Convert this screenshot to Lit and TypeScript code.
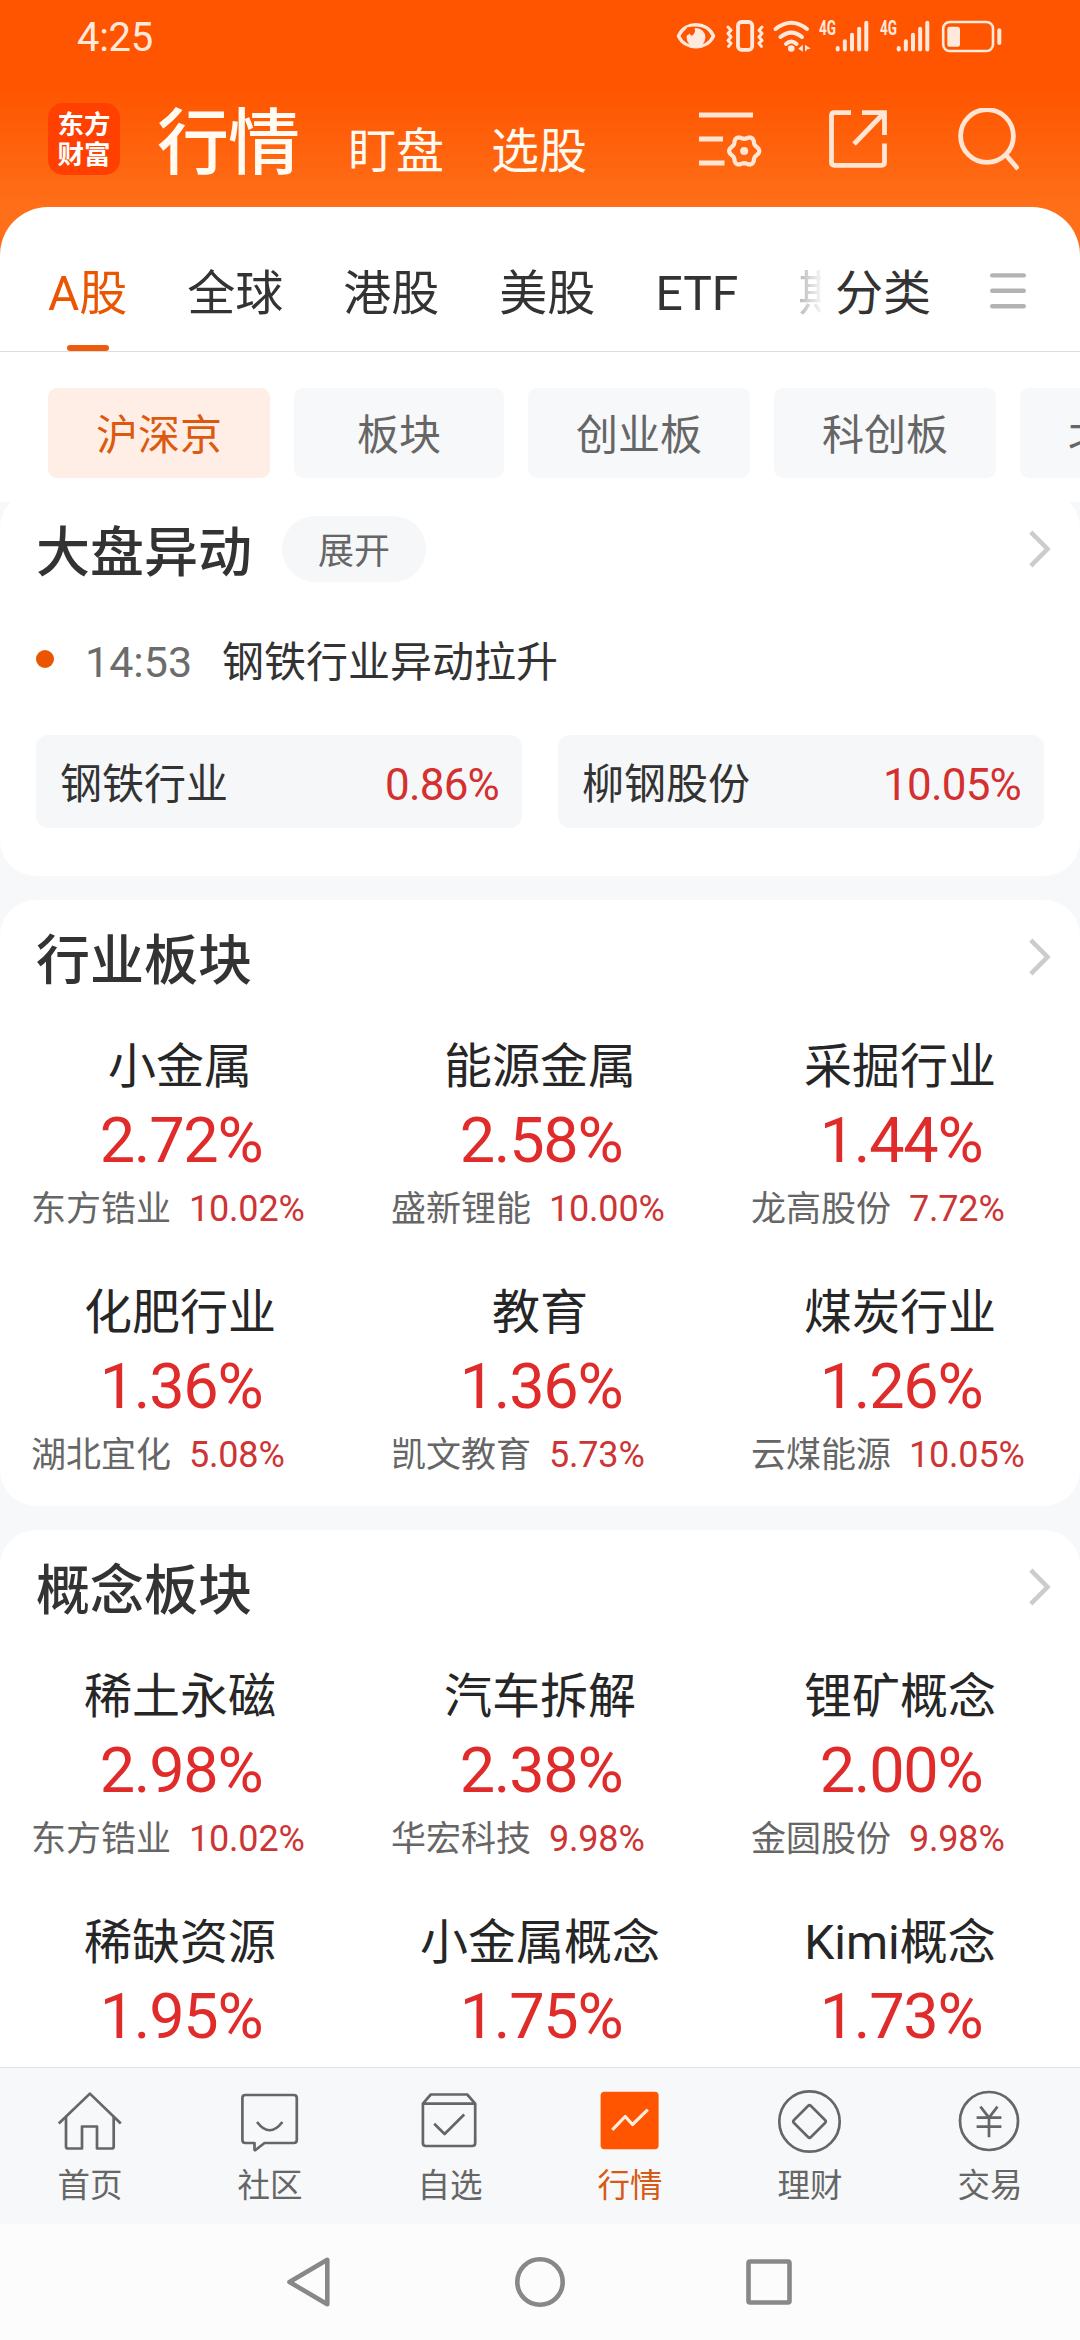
import { LitElement, html, css, svg } from "lit";
import { customElement, property } from "lit/decorators.js";
import { classMap } from "lit/directives/class-map.js";

interface Sector {
  name: string;
  pct: string;
  leader: string;
  leaderPct: string;
}

const s = (name: string, pct: string, leader: string, leaderPct: string): Sector => ({
  name,
  pct,
  leader,
  leaderPct,
});

const INDUSTRIES: Sector[] = [
  s("小金属", "2.72%", "东方锆业", "10.02%"),
  s("能源金属", "2.58%", "盛新锂能", "10.00%"),
  s("采掘行业", "1.44%", "龙高股份", "7.72%"),
  s("化肥行业", "1.36%", "湖北宜化", "5.08%"),
  s("教育", "1.36%", "凯文教育", "5.73%"),
  s("煤炭行业", "1.26%", "云煤能源", "10.05%"),
];

const CONCEPTS: Sector[] = [
  s("稀土永磁", "2.98%", "东方锆业", "10.02%"),
  s("汽车拆解", "2.38%", "华宏科技", "9.98%"),
  s("锂矿概念", "2.00%", "金圆股份", "9.98%"),
  s("稀缺资源", "1.95%", "", ""),
  s("小金属概念", "1.75%", "", ""),
  s("Kimi概念", "1.73%", "", ""),
];

const MARKETS = ["A股", "全球", "港股", "美股", "ETF", "期"];
const BOARDS = ["沪深京", "板块", "创业板", "科创板", "北交所"];

/** Closed outline of a six-lobed gear. */
function gearPath(cx: number, cy: number, r: number, depth: number): string {
  const points: string[] = [];
  for (let a = 0; a < 360; a += 6) {
    const t = (a * Math.PI) / 180;
    const rr = r + depth * Math.cos(6 * t);
    points.push(`${(cx + rr * Math.cos(t)).toFixed(2)} ${(cy + rr * Math.sin(t)).toFixed(2)}`);
  }
  return `M${points.join("L")}Z`;
}

const NAV = [
  {
    label: "首页",
    icon: svg`<path d="M.8 33.5L31.9 3.6L62.8 33.5"/><path d="M8 27V56.5q0 2 2 2H24V36.5H39V58.5H53.7q2 0 2-2V27"/>`,
  },
  {
    label: "社区",
    icon: svg`<path d="M7.4 5H55.8q3 0 3 3V50q0 3-3 3H26.5L17.5 60q-1 .6-1-.6V53H7.4q-3 0-3-3V8q0-3 3-3Z"/><path d="M19 32Q31.7 48.5 44.4 32"/>`,
  },
  {
    label: "自选",
    icon: svg`<path d="M4.9 13.7L12.8 4.5H49.2L57.2 13.7V53q0 3-3 3H7.9q-3 0-3-3ZM4.9 13.7H57.2"/><path d="M16.2 33.7L26.6 44L46.2 24.5"/>`,
  },
  {
    label: "行情",
    active: true,
    icon: svg`<rect class="solid" x="2.6" y="1.7" width="58" height="57.6" rx="4"/><path class="light" d="M14.3 39.9L27.2 26.5L34.5 34.5L49.8 19.7"/>`,
  },
  {
    label: "理财",
    icon: svg`<circle cx="31.5" cy="31.5" r="30.2"/><path d="M30 16Q31.5 14.5 33 16L47 30Q48.5 31.5 47 33L33 47Q31.5 48.5 30 47L16 33Q14.5 31.5 16 30Z"/>`,
  },
  {
    label: "交易",
    icon: svg`<circle cx="31" cy="31" r="29"/><path d="M22.4 16.7L31 27.7L39.5 16.7M18.6 27.7H43.4M18.6 36.7H43.4M31 27.7V47.3"/>`,
  },
];

@customElement("status-bar")
class StatusBar extends LitElement {
  static styles = css`
    :host {
      display: flex;
      justify-content: space-between;
      align-items: center;
      height: 74px;
      padding: 0 78px 0 77px;
      color: #ffe8dc;
    }
    .time {
      font-size: 40px;
      line-height: 48px;
      letter-spacing: -0.3px;
      padding-top: 2px;
    }
    .icons {
      display: block;
      overflow: visible;
      fill: none;
      stroke: #ffe8dc;
      stroke-linecap: round;
      stroke-linejoin: round;
    }
    .f {
      fill: #ffe8dc;
      stroke: none;
    }
    .hole {
      fill: #ff5500;
      stroke: none;
    }
    .net {
      fill: #ffe8dc;
      stroke: none;
      font-size: 19.5px;
      font-weight: 700;
    }
  `;

  private signal(x: number) {
    const tops = [26, 19.3, 12.7, 6.7, 0.7];
    return svg`
      <text class="net" x=${x} y="14.6" textLength="17" lengthAdjust="spacingAndGlyphs">4G</text>
      ${tops.map(
        (t, i) =>
          svg`<rect class="f" x=${x + 16.7 + i * 7.15} y=${t} width="4" height=${31.6 - t} rx="2"/>`
      )}`;
  }

  render() {
    return html`
      <div class="time">4:25</div>
      <svg class="icons" width="326" height="34" viewBox="0 0 326 34">
        <path stroke-width="3.4" d="M2.5 16C9 .9 31 .9 37.5 16C31 30.5 9 30.5 2.5 16Z" />
        <circle class="f" cx="20" cy="17.5" r="9.4" />
        <path class="hole" d="M17.5 6.5a6 6 0 0 1-2 9.5l-1.8-2.6-2 1.8-4-2 3.5-6z" />
        <rect stroke-width="3.8" x="62" y="2" width="14.2" height="27.8" rx="3.5" />
        <path stroke-width="3" d="M52 7l3 3.2l-3 3.4l3 3.4l-3 3.4l3 3l-2.4 3M86 7l-3 3.2l3 3.4l-3 3.4l3 3.4l-3 3l2.4 3" />
        <path stroke-width="4" d="M99.5 9Q115.3-3.4 131 9M104.5 17Q115.3 8.2 126 17M110 24Q115.3 19 120.6 24" />
        <circle class="f" cx="115.3" cy="28.5" r="3.3" />
        <path class="f" d="M122.3 28.8l4.5-4v7zM129 24.8v7l2-2.4 3.6-1z" />
        ${this.signal(143)} ${this.signal(204)}
        <rect stroke-width="2.6" x="267.2" y="2" width="49.8" height="29" rx="6.5" />
        <rect class="f" x="271.3" y="6.7" width="12.7" height="20" rx="2.5" />
        <rect class="f" x="321.3" y="8.3" width="4" height="16.8" rx="2" />
      </svg>
    `;
  }
}

@customElement("app-header")
class AppHeader extends LitElement {
  static styles = css`
    :host {
      display: flex;
      align-items: center;
      height: 133px;
      padding: 0 61px 0 48px;
      box-sizing: border-box;
    }
    .logo {
      display: flex;
      flex-direction: column;
      align-items: center;
      justify-content: center;
      width: 72px;
      height: 72px;
      box-sizing: border-box;
      padding-top: 2px;
      margin-bottom: 3px;
      border-radius: 15px;
      background: #ff4000;
      color: #fff;
      font-size: 26.5px;
      font-weight: 700;
      line-height: 30px;
    }
    .titles {
      display: flex;
      align-items: baseline;
      gap: 47px;
      margin-left: 37px;
      padding-top: 15px;
      flex: 1;
      color: #fffaf2;
      font-size: 48px;
      line-height: 80px;
    }
    .current {
      margin-right: 2px;
      font-size: 72px;
      font-weight: 500;
      letter-spacing: -1px;
    }
    .actions {
      display: flex;
      padding-bottom: 1px;
      fill: none;
      stroke: #ffe5d3;
      stroke-width: 4.8;
    }
    .share {
      margin: 0 70px 0 66px;
    }
    .dot {
      fill: #ffe5d3;
      stroke: none;
    }
  `;

  render() {
    return html`
      <div class="logo"><span>东方</span><span>财富</span></div>
      <div class="titles">
        <span class="current">行情</span>
        <span>盯盘</span>
        <span>选股</span>
      </div>
      <div class="actions">
        <svg width="64" height="64" viewBox="0 0 64 64">
          <path d="M0 7H54M0 31H24M0 55H25.5" />
          <path stroke-width="4.2" stroke-linejoin="round" d=${gearPath(45.2, 43, 13.6, 1.5)} />
          <circle class="dot" cx="45.2" cy="43" r="4" />
        </svg>
        <svg class="share" width="58" height="64" viewBox="0 0 58 64">
          <path d="M22 4.7H5.5q-3 0-3 3V54.3q0 3 3 3H52.5q3 0 3-3V35.5M33 4.7H55.5V27M25 36L55 5" />
        </svg>
        <svg width="62" height="64" viewBox="0 0 62 64">
          <circle cx="30" cy="28" r="26.4" />
          <path d="M48.5 46.5L61 61" />
        </svg>
      </div>
    `;
  }
}

@customElement("market-tabs")
class MarketTabs extends LitElement {
  static styles = css`
    :host {
      display: flex;
      height: 144px;
      padding-left: 48px;
      border-bottom: 1px solid #dcdddf;
      color: #333;
      font-size: 48px;
      line-height: 60px;
      white-space: nowrap;
    }
    .strip {
      display: flex;
      gap: 60px;
      width: 773px;
      overflow: hidden;
      -webkit-mask-image: linear-gradient(to right, #000 calc(100% - 72px), rgba(0, 0, 0, 0.05));
      mask-image: linear-gradient(to right, #000 calc(100% - 72px), rgba(0, 0, 0, 0.05));
    }
    .tab {
      display: flex;
      flex: none;
      flex-direction: column;
      align-items: center;
      justify-content: space-between;
      padding-top: 57px;
    }
    .active {
      color: #ea5504;
    }
    .active::after {
      content: "";
      width: 42px;
      height: 6px;
      border-radius: 3px;
      background: #ef5a0c;
    }
    .more {
      padding: 57px 0 0 14px;
    }
    .menu {
      margin: 66px 0 0 59px;
      stroke: #b3b3b3;
      stroke-width: 4.4;
      stroke-linecap: round;
    }
  `;

  render() {
    return html`
      <div class="strip">
        ${MARKETS.map(
          (m, i) => html`<div class=${classMap({ tab: true, active: i === 0 })}><span>${m}</span></div>`
        )}
      </div>
      <div class="more">分类</div>
      <svg class="menu" width="36" height="36" viewBox="0 0 36 36">
        <path d="M2.2 2.4H33.8M2.2 17.8H33.8M2.2 33.2H33.8" />
      </svg>
    `;
  }
}

@customElement("board-tabs")
class BoardTabs extends LitElement {
  static styles = css`
    :host {
      display: flex;
      gap: 24px;
      padding: 36px 0 24px 48px;
      overflow: hidden;
      white-space: nowrap;
    }
    .chip {
      display: flex;
      flex: none;
      align-items: center;
      justify-content: center;
      box-sizing: border-box;
      min-width: 210px;
      height: 90px;
      padding: 6px 48px 0;
      border-radius: 9px;
      background: #f7f8fa;
      color: #666;
      font-size: 42px;
      line-height: 50px;
    }
    .active {
      background: #ffeee6;
      color: #dc5a10;
    }
  `;

  render() {
    return BOARDS.map(
      (b, i) => html`<div class=${classMap({ chip: true, active: i === 0 })}>${b}</div>`
    );
  }
}

@customElement("section-head")
class SectionHead extends LitElement {
  @property() title = "";

  static styles = css`
    :host {
      display: flex;
      align-items: center;
      height: 114px;
      padding: 0 28px 0 36px;
    }
    .title {
      padding-top: 10px;
      font-size: 54px;
      font-weight: 500;
      line-height: 70px;
      color: #333;
    }
    .chevron {
      margin-left: auto;
      fill: none;
      stroke: #ccc;
      stroke-width: 4.6;
    }
  `;

  render() {
    return html`
      <div class="title">${this.title}</div>
      <slot></slot>
      <svg class="chevron" width="24" height="38" viewBox="0 0 24 38">
        <path d="M2.8 2.2L19.5 19L2.8 35.8" />
      </svg>
    `;
  }
}

@customElement("sector-grid")
class SectorGrid extends LitElement {
  @property({ attribute: false }) items: Sector[] = [];

  static styles = css`
    :host {
      display: grid;
      grid-template-columns: repeat(3, 1fr);
      row-gap: 52px;
      padding: 23px 0 29px;
    }
    .cell {
      display: flex;
      flex-direction: column;
      white-space: nowrap;
    }
    .name {
      text-align: center;
      font-size: 48px;
      line-height: 60px;
      color: #262626;
    }
    .pct {
      margin-top: 6px;
      padding-left: 2px;
      text-align: center;
      font-size: 63px;
      line-height: 76px;
      letter-spacing: -1.3px;
      color: #e02b2b;
    }
    .leader {
      display: flex;
      align-items: baseline;
      gap: 18px;
      margin-top: 8px;
      padding-left: 31px;
      height: 44px;
      font-size: 35px;
      line-height: 44px;
      color: #666;
    }
    .leader-pct {
      font-size: 36px;
      letter-spacing: -0.2px;
      color: #cd3535;
    }
  `;

  render() {
    return this.items.map(
      (it) => html`
        <div class="cell">
          <div class="name">${it.name}</div>
          <div class="pct">${it.pct}</div>
          <div class="leader">
            <span>${it.leader}</span>
            <span class="leader-pct">${it.leaderPct}</span>
          </div>
        </div>
      `
    );
  }
}

@customElement("bottom-nav")
class BottomNav extends LitElement {
  static styles = css`
    :host {
      display: grid;
      grid-template-columns: repeat(6, 1fr);
      box-sizing: border-box;
      height: 157px;
      border-top: 1px solid #e0e1e4;
      background: #f7f8fa;
    }
    .item {
      display: flex;
      flex-direction: column;
      align-items: center;
      gap: 12px;
      padding-top: 22px;
      font-size: 32.5px;
      line-height: 40px;
      color: #666;
    }
    .icon {
      overflow: visible;
      fill: none;
      stroke: #666;
      stroke-width: 2.7;
      stroke-linejoin: round;
    }
    .solid {
      fill: #ff5500;
      stroke: none;
    }
    .light {
      stroke: #ffebdf;
      stroke-width: 3.2;
    }
    .active {
      color: #d65a14;
    }
  `;

  render() {
    return NAV.map(
      (n) => html`
        <div class=${classMap({ item: true, active: !!n.active })}>
          <svg class="icon" width="64" height="64" viewBox="0 0 64 64">${n.icon}</svg>
          <span>${n.label}</span>
        </div>
      `
    );
  }
}

@customElement("system-nav")
class SystemNav extends LitElement {
  static styles = css`
    :host {
      display: flex;
      align-items: center;
      justify-content: center;
      gap: 170px;
      height: 116px;
      background: #fcfcfc;
    }
    svg {
      fill: none;
      stroke: #888;
      stroke-width: 4.6;
      stroke-linejoin: round;
    }
  `;

  render() {
    return html`
      <svg width="60" height="60" viewBox="0 0 60 60"><path d="M47.3 7.8V52.2L9.5 30Z" /></svg>
      <svg width="60" height="60" viewBox="0 0 60 60"><circle cx="30" cy="30" r="22.7" /></svg>
      <svg width="60" height="60" viewBox="0 0 60 60">
        <rect x="8.5" y="9.5" width="41" height="41" rx="1.5" />
      </svg>
    `;
  }
}

@customElement("app-root")
class AppRoot extends LitElement {
  static styles = css`
    :host {
      display: flex;
      flex-direction: column;
      width: 1080px;
      height: 2340px;
      overflow: hidden;
      background: #f6f8fa;
      font-family: Roboto, "Noto Sans CJK SC", sans-serif;
    }
    .top {
      flex: none;
      background: linear-gradient(#ff5500 88px, #ff6e18 205px);
    }
    .sheet {
      border-radius: 48px 48px 0 0;
      background: #fff;
    }
    .feed {
      flex: 1;
      min-height: 0;
      overflow: hidden;
    }
    .stack {
      display: flex;
      flex-direction: column;
      gap: 24px;
      margin-top: -10px;
    }
    .card {
      border-radius: 36px;
      background: #fff;
    }
    .pill {
      display: flex;
      align-items: center;
      justify-content: center;
      box-sizing: border-box;
      width: 144px;
      height: 66px;
      margin-left: 30px;
      padding-top: 6px;
      border-radius: 33px;
      background: #f6f7f9;
      color: #666;
      font-size: 36px;
      line-height: 44px;
    }
    .event {
      display: flex;
      align-items: center;
      gap: 30px;
      margin-top: 26px;
      padding-left: 36px;
      font-size: 42px;
      line-height: 60px;
      color: #333;
    }
    .dot {
      width: 18px;
      height: 18px;
      margin-bottom: 8px;
      border-radius: 50%;
      background: #ea5504;
    }
    .time {
      width: 107px;
      margin-bottom: 2px;
      padding-left: 1px;
      font-size: 43px;
      color: #6c6c6c;
    }
    .quotes {
      display: grid;
      grid-template-columns: 1fr 1fr;
      gap: 36px;
      padding: 43px 36px 48px;
    }
    .event + .quotes {
      margin-top: -1px;
      padding-top: 42px;
    }
    .quote {
      display: flex;
      align-items: center;
      justify-content: space-between;
      box-sizing: border-box;
      height: 93px;
      padding: 7px 23px 0 24px;
      border-radius: 12px;
      background: #f6f7f9;
      font-size: 42px;
      line-height: 56px;
      color: #333;
    }
    .up {
      font-size: 44px;
      letter-spacing: -0.8px;
      color: #d43030;
    }
  `;

  render() {
    return html`
      <div class="top">
        <status-bar></status-bar>
        <app-header></app-header>
        <div class="sheet">
          <market-tabs></market-tabs>
          <board-tabs></board-tabs>
        </div>
      </div>
      <div class="feed">
        <div class="stack">
          <div class="card">
            <section-head title="大盘异动"><div class="pill">展开</div></section-head>
            <div class="event">
              <span class="dot"></span>
              <span class="time">14:53</span>
              <span>钢铁行业异动拉升</span>
            </div>
            <div class="quotes">
              <div class="quote"><span>钢铁行业</span><span class="up">0.86%</span></div>
              <div class="quote"><span>柳钢股份</span><span class="up">10.05%</span></div>
            </div>
          </div>
          <div class="card">
            <section-head title="行业板块"></section-head>
            <sector-grid .items=${INDUSTRIES}></sector-grid>
          </div>
          <div class="card">
            <section-head title="概念板块"></section-head>
            <sector-grid .items=${CONCEPTS}></sector-grid>
          </div>
        </div>
      </div>
      <bottom-nav></bottom-nav>
      <system-nav></system-nav>
    `;
  }
}
